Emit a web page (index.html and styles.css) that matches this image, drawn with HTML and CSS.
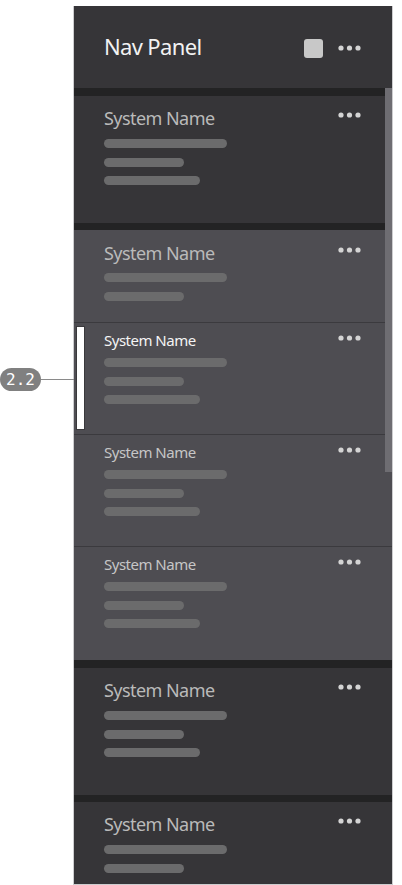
FILE: index.html
```html
<!DOCTYPE html>
<html lang="en">
<head>
<meta charset="utf-8">
<title>Nav Panel</title>
<link rel="stylesheet" href="styles.css">
</head>
<body>
<div class="annotation">
  <span class="pill">2.2</span>
  <span class="leader"></span>
</div>
<div class="panel">
  <header class="panel-head">
    <h1 class="panel-title">Nav Panel</h1>
    <div class="head-actions">
      <span class="square"></span>
      <svg class="dots" viewBox="0 0 24 6" width="24" height="6"><circle cx="3" cy="3" r="2.6"/><circle cx="11.5" cy="3" r="2.6"/><circle cx="20" cy="3" r="2.6"/></svg>
    </div>
  </header>
  <div class="scroll">
    <div class="band"></div>
    <div class="card dark">
      <div class="row"><span class="title">System Name</span><svg class="dots" viewBox="0 0 24 6" width="24" height="6"><circle cx="3" cy="3" r="2.6"/><circle cx="11.5" cy="3" r="2.6"/><circle cx="20" cy="3" r="2.6"/></svg></div>
      <div class="bars"><span class="bar b1"></span><span class="bar b2"></span><span class="bar b3"></span></div>
    </div>
    <div class="band thin"></div>
    <div class="group">
      <div class="card light big">
        <div class="row"><span class="title">System Name</span><svg class="dots" viewBox="0 0 24 6" width="24" height="6"><circle cx="3" cy="3" r="2.6"/><circle cx="11.5" cy="3" r="2.6"/><circle cx="20" cy="3" r="2.6"/></svg></div>
        <div class="bars"><span class="bar b1"></span><span class="bar b2"></span></div>
      </div>
      <div class="card light small selected">
        <span class="marker"></span>
        <div class="row"><span class="title">System Name</span><svg class="dots" viewBox="0 0 24 6" width="24" height="6"><circle cx="3" cy="3" r="2.6"/><circle cx="11.5" cy="3" r="2.6"/><circle cx="20" cy="3" r="2.6"/></svg></div>
        <div class="bars"><span class="bar b1"></span><span class="bar b2"></span><span class="bar b3"></span></div>
      </div>
      <div class="card light small">
        <div class="row"><span class="title">System Name</span><svg class="dots" viewBox="0 0 24 6" width="24" height="6"><circle cx="3" cy="3" r="2.6"/><circle cx="11.5" cy="3" r="2.6"/><circle cx="20" cy="3" r="2.6"/></svg></div>
        <div class="bars"><span class="bar b1"></span><span class="bar b2"></span><span class="bar b3"></span></div>
      </div>
      <div class="card light small">
        <div class="row"><span class="title">System Name</span><svg class="dots" viewBox="0 0 24 6" width="24" height="6"><circle cx="3" cy="3" r="2.6"/><circle cx="11.5" cy="3" r="2.6"/><circle cx="20" cy="3" r="2.6"/></svg></div>
        <div class="bars"><span class="bar b1"></span><span class="bar b2"></span><span class="bar b3"></span></div>
      </div>
    </div>
    <div class="band"></div>
    <div class="card dark">
      <div class="row"><span class="title">System Name</span><svg class="dots" viewBox="0 0 24 6" width="24" height="6"><circle cx="3" cy="3" r="2.6"/><circle cx="11.5" cy="3" r="2.6"/><circle cx="20" cy="3" r="2.6"/></svg></div>
      <div class="bars"><span class="bar b1"></span><span class="bar b2"></span><span class="bar b3"></span></div>
    </div>
    <div class="band thin"></div>
    <div class="card dark">
      <div class="row"><span class="title">System Name</span><svg class="dots" viewBox="0 0 24 6" width="24" height="6"><circle cx="3" cy="3" r="2.6"/><circle cx="11.5" cy="3" r="2.6"/><circle cx="20" cy="3" r="2.6"/></svg></div>
      <div class="bars"><span class="bar b1"></span><span class="bar b2"></span></div>
    </div>
    <span class="thumb"></span>
  </div>
</div>
</body>
</html>
```

FILE: styles.css
```css
* { box-sizing: border-box; }
html, body { margin: 0; padding: 0; background: #ffffff; }
body {
  position: relative;
  height: 885px;
  overflow: hidden;
  padding-top: 6px;
  font-family: "Noto Sans", "Open Sans", sans-serif;
}

.panel {
  margin-left: 73px;
  width: 320px;
  height: 879px;
  border: 1px solid #cdcdcf;
  border-top: none;
  background: #363538;
  display: flex;
  flex-direction: column;
  overflow: hidden;
}

.panel-head {
  flex: 0 0 82px;
  display: flex;
  align-items: center;
  justify-content: space-between;
  padding: 0 30px;
  background: #363538;
}
.panel-title {
  margin: 0 0 3px 0;
  font-size: 22px;
  font-weight: 400;
  color: #f2f2f2;
  letter-spacing: -0.65px;
}
.head-actions {
  display: flex;
  align-items: center;
  gap: 15px;
  margin-top: 2px;
}
.square {
  width: 19px;
  height: 19px;
  border-radius: 3px;
  background: #c8c8c8;
}
.dots { display: block; flex: 0 0 auto; }
.dots circle { fill: #d4d4d4; }

.scroll {
  position: relative;
  flex: 1 1 auto;
  overflow: hidden;
}
.band { height: 8px; background: #232324; }
.band.thin { height: 7px; }

.card {
  position: relative;
  padding: 10px 30px 0 30px;
}
.card.dark { height: 127px; background: #363538; }
.card.light { background: #4e4d52; border-top: 1px solid #3b3a3e; }
.card.light:first-child { border-top: none; }
.group { padding-bottom: 2px; background: #4e4d52; }

.row {
  display: flex;
  justify-content: space-between;
  align-items: flex-start;
}
.title {
  font-size: 18px;
  line-height: 24px;
  color: #bababa;
  letter-spacing: -0.55px;
}
.row .dots { margin-top: 6px; }

.bars {
  display: flex;
  flex-direction: column;
  gap: 9.5px;
  margin-top: 9px;
}
.bar {
  display: block;
  height: 9px;
  border-radius: 4.5px;
  background: #6b6b6c;
}
.b1 { width: 123px; }
.b2 { width: 80px; }
.b3 { width: 96px; }

.card.big { height: 92px; padding-top: 11px; }
.card.big .bars { margin-top: 8px; }

.card.small { height: 112px; padding-top: 7px; }
.card.small .title {
  font-size: 15px;
  line-height: 20px;
  color: #c6c6c6;
  letter-spacing: -0.5px;
}
.card.small .row .dots { margin-top: 5px; }
.card.small .bars { margin-top: 8px; }
.card.selected .title { color: #f4f4f4; }

.marker {
  position: absolute;
  left: 3px;
  top: 4px;
  width: 7px;
  height: 102px;
  background: #ffffff;
  outline: 1px solid #3a393c;
}

.thumb {
  position: absolute;
  right: 0;
  top: 0;
  width: 7px;
  height: 384px;
  background: #6e6d72;
}

.annotation {
  position: absolute;
  left: 0;
  top: 368px;
  display: flex;
  align-items: center;
}
.pill {
  width: 41px;
  height: 23px;
  border-radius: 11.5px;
  background: #808080;
  color: #ffffff;
  font-family: "DejaVu Sans Mono", "Liberation Mono", monospace;
  font-size: 16px;
  line-height: 23px;
  text-align: center;
  letter-spacing: 0;
}
.leader {
  width: 42px;
  height: 1px;
  background: #8a8a8a;
}
```
